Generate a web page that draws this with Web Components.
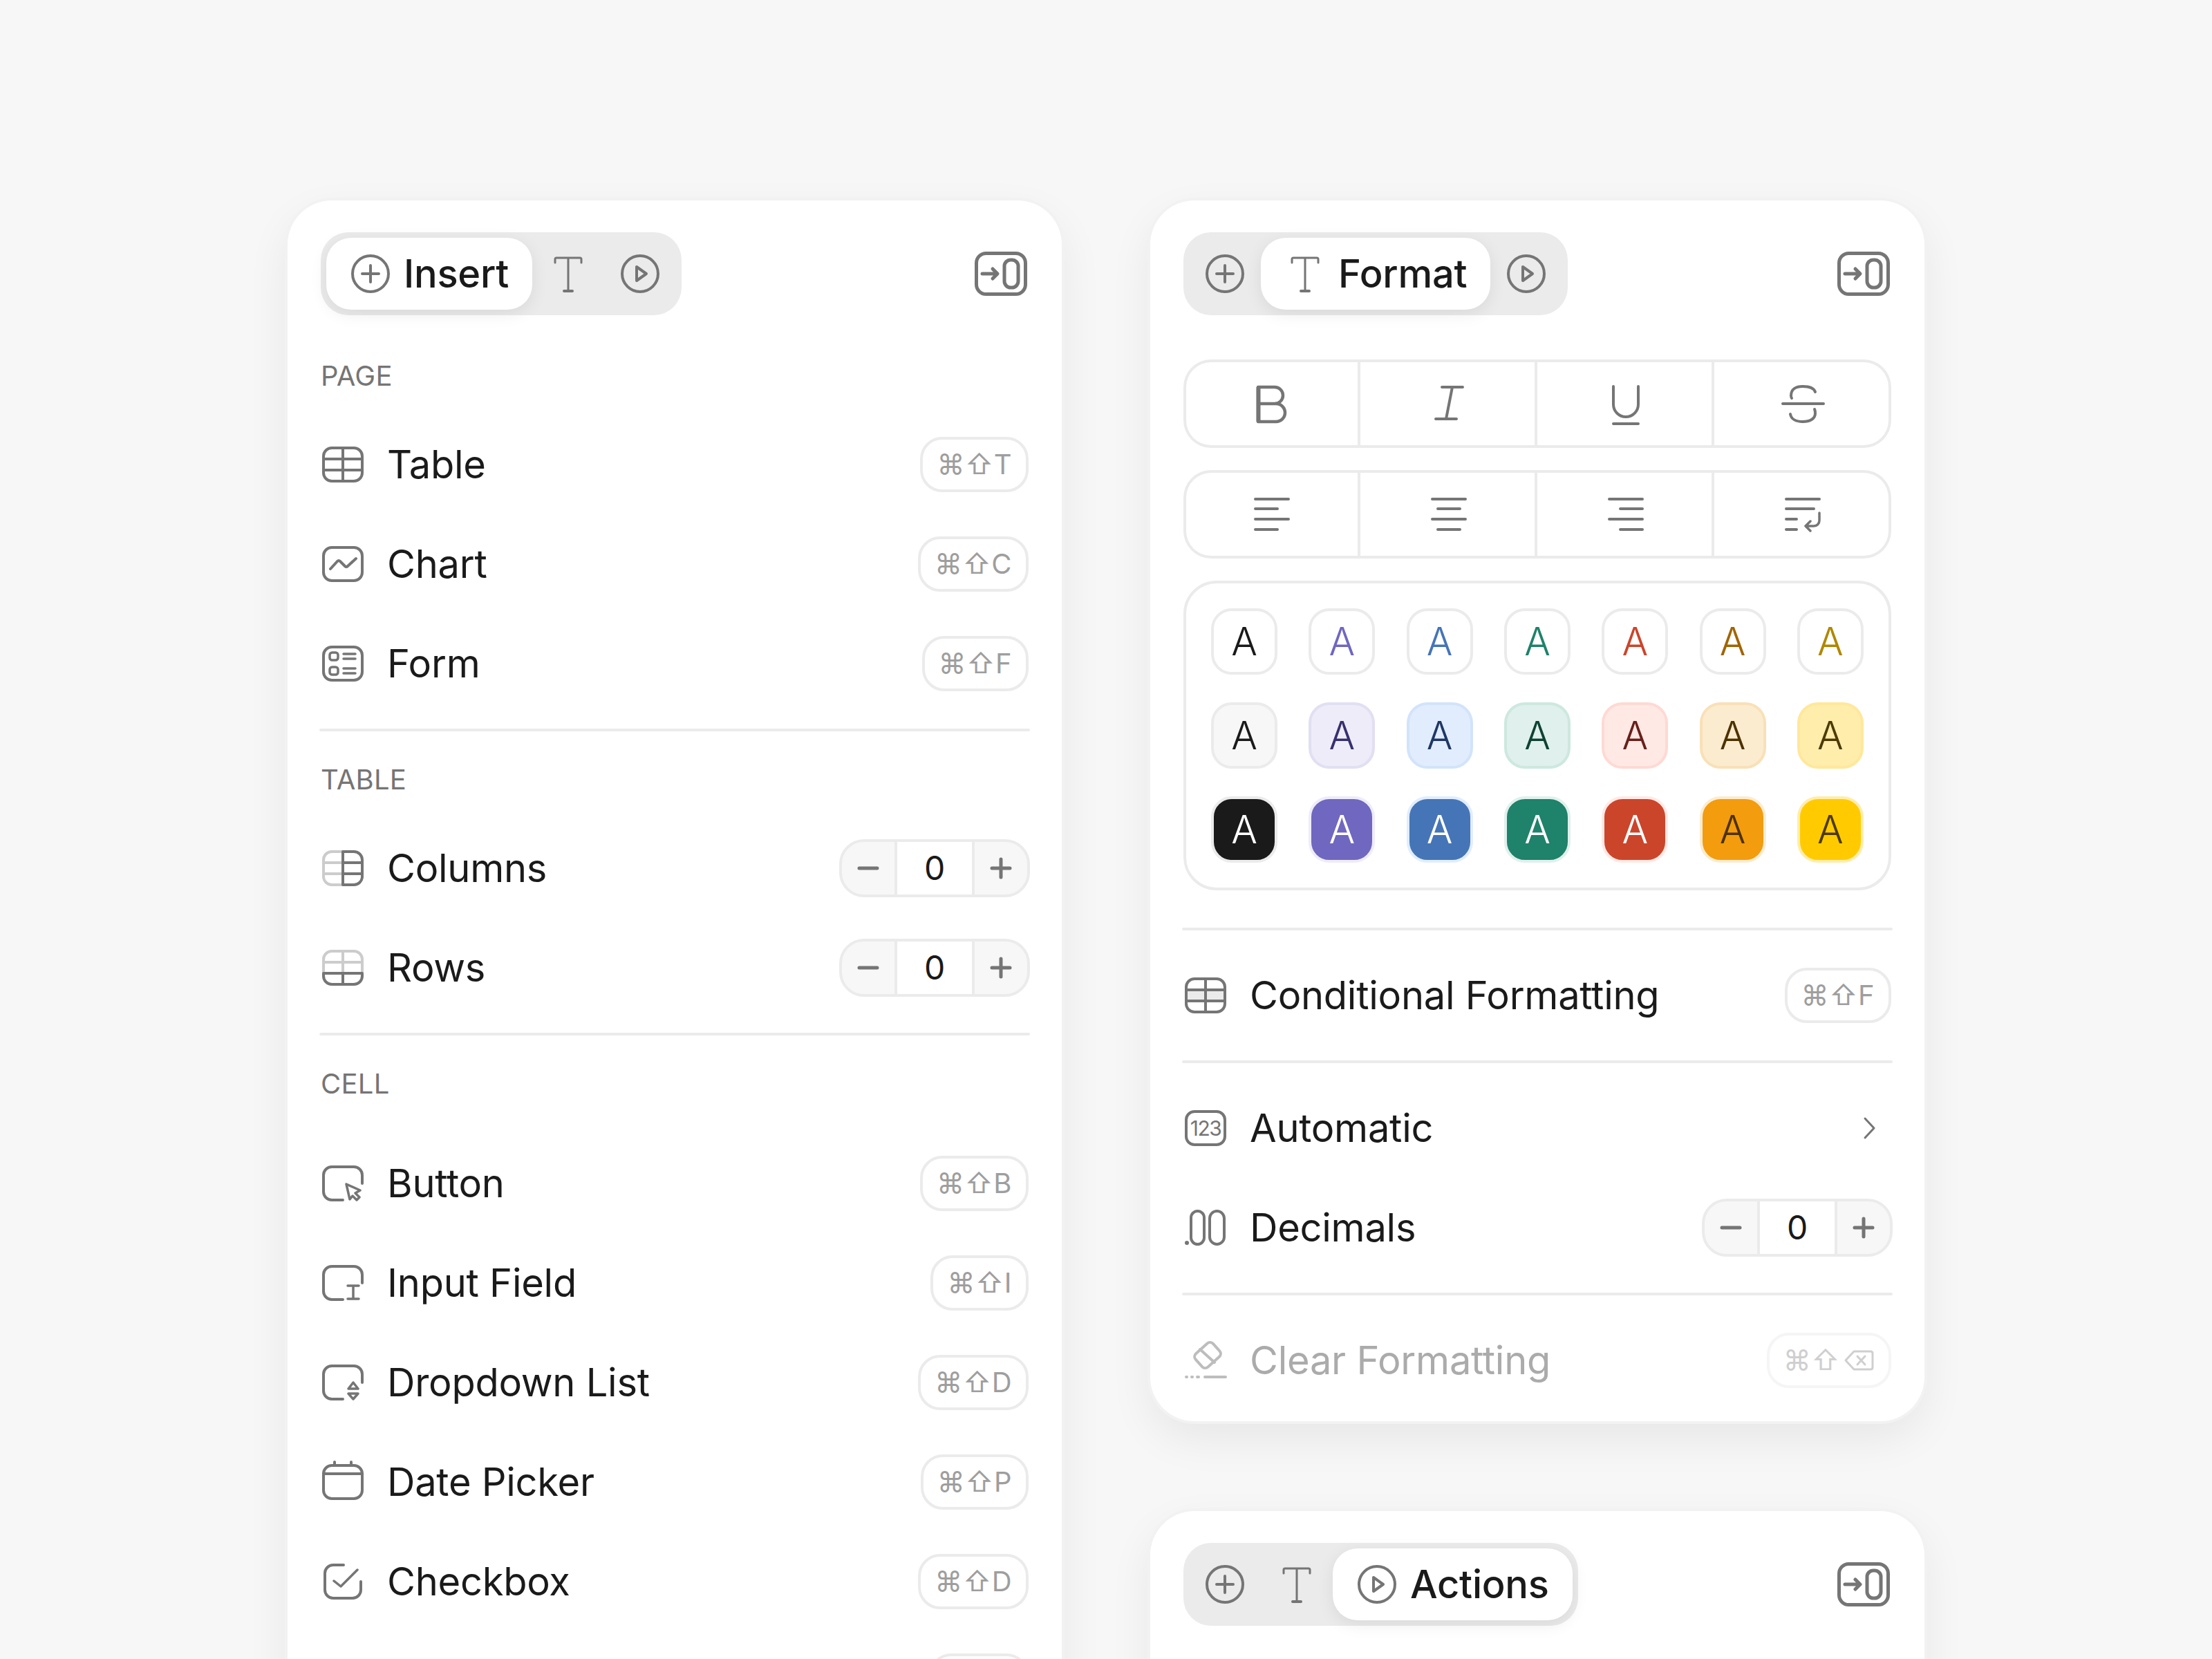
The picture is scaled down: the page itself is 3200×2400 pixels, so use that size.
<!DOCTYPE html>
<html>
<head>
<meta charset="utf-8">
<title>Panels</title>
<style>
    html, body { margin: 0; height: 2400px; overflow: hidden; background: #f7f7f7; }
    body { font-family: Inter, "Liberation Sans", sans-serif; color: #1a1a1a; }
</style>
</head>
<body>
<panel-board>
    <side-panel>
        <tab-bar active="insert"></tab-bar>
        <section-label>PAGE</section-label>
        <menu-row icon="table" keys="⌘⇧T">Table</menu-row>
        <menu-row icon="chart" keys="⌘⇧C">Chart</menu-row>
        <menu-row icon="form" keys="⌘⇧F">Form</menu-row>
        <rule-line></rule-line>
        <section-label>TABLE</section-label>
        <menu-row icon="columns" stepper>Columns</menu-row>
        <menu-row icon="rows" stepper>Rows</menu-row>
        <rule-line></rule-line>
        <section-label wide>CELL</section-label>
        <menu-row icon="button" keys="⌘⇧B">Button</menu-row>
        <menu-row icon="input" keys="⌘⇧I">Input Field</menu-row>
        <menu-row icon="dropdown" keys="⌘⇧D">Dropdown List</menu-row>
        <menu-row icon="date" keys="⌘⇧P">Date Picker</menu-row>
        <menu-row icon="checkbox" keys="⌘⇧D">Checkbox</menu-row>
        <menu-row keys=""></menu-row>
    </side-panel>
    <panel-column>
        <side-panel>
            <tab-bar active="format"></tab-bar>
            <button-group icons="bold italic underline strike"></button-group>
            <button-group icons="left center right wrap"></button-group>
            <color-grid></color-grid>
            <rule-line></rule-line>
            <menu-row icon="conditional" keys="⌘⇧F">Conditional Formatting</menu-row>
            <rule-line></rule-line>
            <menu-row icon="numbers" chevron>Automatic</menu-row>
            <menu-row icon="decimals" stepper>Decimals</menu-row>
            <rule-line></rule-line>
            <menu-row icon="eraser" keys="⌘⇧" backspace disabled>Clear Formatting</menu-row>
        </side-panel>
        <side-panel tall>
            <tab-bar active="actions"></tab-bar>
        </side-panel>
    </panel-column>
</panel-board>

<script>
const FRAME_OPEN = 'M60 32V20a12 12 0 0 0-12-12H16A12 12 0 0 0 4 20v24a12 12 0 0 0 12 12h16';
const ICONS = {
    plus: '<circle cx="32" cy="32" r="26"/><path d="M20 32h24M32 20v24"/>',
    text: '<path d="M13 16v-5q0-2 2-2h34q2 0 2 2v5M32 9v47" stroke-width="3"/><path d="M26 57h12"/>',
    play: '<circle cx="32" cy="32" r="26"/><path d="M27 22v20l14-10z"/>',
    table: '<rect x="4" y="8" width="56" height="48" rx="12"/><path d="M4 24h56M4 40h56M32 8v48"/>',
    chart: '<rect x="4" y="8" width="56" height="48" rx="12"/><path d="M14 39l10-11q2-2 4 0l7 7q2 2 4 0l12-11"/>',
    form: '<rect x="4" y="8" width="56" height="48" rx="12"/><rect x="13" y="16" width="12" height="11" rx="3.5" stroke-width="3.5"/><rect x="13" y="37" width="12" height="11" rx="3.5" stroke-width="3.5"/><path d="M33 18h17M33 25h17M33 39h17M33 46h17" stroke-width="3.5"/>',
    columns: '<g stroke="#cccccc"><path d="M32 8H16A12 12 0 0 0 4 20v24a12 12 0 0 0 12 12h16M4 24h28M4 40h28"/></g><path d="M32 8h16a12 12 0 0 1 12 12v24a12 12 0 0 1-12 12H32zM32 24h28M32 40h28"/>',
    rows: '<g stroke="#cccccc"><path d="M4 40V20A12 12 0 0 1 16 8h32a12 12 0 0 1 12 12v20M4 24h56M32 8v32"/></g><path d="M4 40h56v4a12 12 0 0 1-12 12H16A12 12 0 0 1 4 44zM32 40v16"/>',
    button: `<path d="${FRAME_OPEN}"/><path d="M37 33l20 9-7 4 6 6-4 4-6-6-4 5z" stroke-width="3.5"/>`,
    input: `<path d="${FRAME_OPEN}"/><path d="M39 36h16M39 55h16M47 36v19" stroke-width="3.5"/>`,
    dropdown: `<path d="${FRAME_OPEN}"/><path d="M47 32l7 9H40zM40 48h14l-7 8z" stroke-width="3.5"/>`,
    date: '<rect x="4" y="8" width="56" height="48" rx="12"/><path d="M4 20h56M20 3v5M44 3v5"/>',
    checkbox: '<path d="M33 8H18A12 12 0 0 0 6 20v24a12 12 0 0 0 12 12h28a12 12 0 0 0 12-12V32"/><path d="M19 31l10 8 24-24" stroke-width="3.5"/>',
    conditional: '<rect x="4" y="24" width="56" height="16" fill="#ebebeb" stroke="none"/><rect x="4" y="8" width="56" height="48" rx="12"/><path d="M4 24h56M4 40h56M32 8v48"/>',
    numbers: '<rect x="4" y="8" width="56" height="48" rx="12"/><text x="32" y="43" text-anchor="middle" font-size="30" letter-spacing="-1.5" fill="currentColor" stroke="none">123</text>',
    decimals: '<circle cx="5" cy="54" r="3" fill="currentColor" stroke="none"/><rect x="11" y="8" width="19" height="48" rx="9.5"/><rect x="38" y="8" width="21" height="48" rx="10.5"/>',
    eraser: '<rect x="18" y="11.500" width="34" height="26" rx="6" transform="rotate(-42 35 24.500)"/><path d="M24 16l21 19"/><path d="M4 56h1M12 56h1M20 56h2M31 56h30"/>',
    bold: '<path d="M12 8h24a12 12 0 0 1 0 24H12zM12 32h26a13 13 0 0 1 0 26H12z" stroke-width="4.500"/><path d="M12.500 8v50" stroke-width="6" stroke-linecap="butt"/>',
    italic: '<path d="M22 8h30M13 54h30M37 8l-9 46"/>',
    underline: '<path d="M14 7v26a18 18 0 0 0 36 0V7M14 61h36"/>',
    strike: '<path d="M50 15c-2-6-9-8-18-8-10 0-17 4-17 13 0 1 0 3 1 4M49 40c1 2 1 4 1 6 0 8-8 12-18 12S15 54 14 47M3 32h59"/>',
    left: '<path d="M8 10h48M8 24h32M8 39h48M8 54h32"/>',
    center: '<path d="M8 10h48M16 24h32M8 39h48M16 54h32"/>',
    right: '<path d="M8 10h48M24 24h32M8 39h48M24 54h32"/>',
    wrap: '<path d="M8 10h48M8 24h40M8 39h15M8 54h15"/><path d="M56 30v11a8 8 0 0 1-8 8H36M43 42l-7 7 7 7" stroke-width="3.5"/>',
    collapse: '<rect x="2.500" y="2.500" width="71" height="59" rx="14" stroke-width="5"/><rect x="43" y="12" width="20" height="40" rx="9" stroke-width="5"/><path d="M11 32h21M26 25l7 7-7 7" stroke-width="5"/>',
    chevron: '<path d="M26 18l13 14-13 14" stroke-width="3"/>',
    backspace: '<path d="M14 3h24q3 0 3 3v20q0 3-3 3H14L2 16zM19 10l11 12M30 10L19 22" stroke-width="3"/>'
};

class PanelBoard extends HTMLElement {
    constructor() {
        super();
        this.attachShadow({ mode: 'open' });
        this.shadowRoot.innerHTML = `
            <style>
                :host {
                    display: flex;
                    align-items: flex-start;
                    gap: 128px;
                    padding: 290px 0 0 416px;
                }
            </style>
            <slot></slot>
        `;
    }
}

class PanelColumn extends HTMLElement {
    constructor() {
        super();
        this.attachShadow({ mode: 'open' });
        this.shadowRoot.innerHTML = `
            <style>
                :host {
                    display: flex;
                    flex-direction: column;
                    gap: 130px;
                }
            </style>
            <slot></slot>
        `;
    }
}

class SidePanel extends HTMLElement {
    constructor() {
        super();
        this.attachShadow({ mode: 'open' });
        this.shadowRoot.innerHTML = `
            <style>
                :host {
                    display: flex;
                    flex-direction: column;
                    flex: none;
                    box-sizing: border-box;
                    width: 1120px;
                    padding: 46px 48px 16px;
                    background: #fff;
                    border-radius: 64px;
                    box-shadow: 0 0 0 4px #f2f2f2, 0 24px 64px rgba(0, 0, 0, 0.07);
                }

                :host([tall]) {
                    min-height: 500px;
                }
            </style>
            <slot></slot>
        `;
    }
}

class UiIcon extends HTMLElement {
    constructor() {
        super();
        this.attachShadow({ mode: 'open' });
    }

    connectedCallback() {
        const width = this.getAttribute('width') || 64;
        const height = this.getAttribute('height') || 64;
        this.shadowRoot.innerHTML = `
            <style>
                :host {
                    display: block;
                    flex: none;
                    width: ${width}px;
                    height: ${height}px;
                    color: var(--icon-color, #757575);
                }

                svg {
                    display: block;
                    overflow: visible;
                    fill: none;
                    stroke: currentColor;
                    stroke-width: 4;
                    stroke-linecap: round;
                    stroke-linejoin: round;
                }
            </style>
            <svg width="${width}" height="${height}" viewBox="0 0 ${width} ${height}">${ICONS[this.getAttribute('name')] || ''}</svg>
        `;
    }
}

const TABS = [
    { id: 'insert', icon: 'plus', label: 'Insert' },
    { id: 'format', icon: 'text', label: 'Format' },
    { id: 'actions', icon: 'play', label: 'Actions' }
];

class TabBar extends HTMLElement {
    constructor() {
        super();
        this.attachShadow({ mode: 'open' });
    }

    connectedCallback() {
        const active = this.getAttribute('active');
        const tabs = TABS.map(tab => tab.id === active
            ? `<div class="tab on"><ui-icon name="${tab.icon}"></ui-icon><span>${tab.label}</span></div>`
            : `<div class="tab"><ui-icon name="${tab.icon}"></ui-icon></div>`).join('');
        this.shadowRoot.innerHTML = `
            <style>
                :host {
                    display: flex;
                    align-items: center;
                    justify-content: space-between;
                    margin-bottom: 64px;
                }

                .pill {
                    display: flex;
                    padding: 8px;
                    background: #ebebeb;
                    border-radius: 40px;
                }

                .tab {
                    display: flex;
                    align-items: center;
                    box-sizing: border-box;
                    height: 104px;
                    padding: 0 20px;
                }

                .tab.on {
                    gap: 16px;
                    padding: 0 34px 0 32px;
                    background: #fff;
                    border-radius: 36px;
                    box-shadow: 0 6px 24px rgba(0, 0, 0, 0.08);
                }

                span {
                    font-size: 56px;
                    font-weight: 500;
                    line-height: 64px;
                    letter-spacing: -0.25px;
                    color: #1a1a1a;
                }

                .end {
                    margin-right: 2px;
                }
            </style>
            <div class="pill">${tabs}</div>
            <ui-icon class="end" name="collapse" width="76"></ui-icon>
        `;
    }
}

class SectionLabel extends HTMLElement {
    constructor() {
        super();
        this.attachShadow({ mode: 'open' });
        this.shadowRoot.innerHTML = `
            <style>
                :host {
                    display: block;
                    margin: 0 0 32px;
                    font-size: 40px;
                    line-height: 48px;
                    letter-spacing: 0.25px;
                    color: #757575;
                }

                :host([wide]) {
                    margin-bottom: 48px;
                }
            </style>
            <slot></slot>
        `;
    }
}

class RuleLine extends HTMLElement {
    constructor() {
        super();
        this.attachShadow({ mode: 'open' });
        this.shadowRoot.innerHTML = `
            <style>
                :host {
                    display: block;
                    height: 4px;
                    margin: 22px -2px;
                    background: #ebebeb;
                    border-radius: 2px;
                }
            </style>
        `;
    }

    connectedCallback() {
        const next = this.nextElementSibling;
        if (next && next.tagName === 'SECTION-LABEL') {
            this.style.marginBottom = '46px';
        }
    }
}

class KeyHint extends HTMLElement {
    constructor() {
        super();
        this.attachShadow({ mode: 'open' });
    }

    connectedCallback() {
        const backspace = this.hasAttribute('backspace')
            ? '<ui-icon class="del" name="backspace" width="44" height="32"></ui-icon>' : '';
        this.shadowRoot.innerHTML = `
            <style>
                :host {
                    display: flex;
                    align-items: center;
                    box-sizing: border-box;
                    height: 80px;
                    padding: 0 20px;
                    border: 4px solid #ebebeb;
                    border-radius: 32px;
                    font-size: 40px;
                    line-height: 48px;
                    letter-spacing: 0.5px;
                    color: #9e9e9e;
                    --icon-color: #cfcfcf;
                }

                :host([keys=""]) {
                    width: 144px;
                }

                :host([disabled]) {
                    border-color: #f5f5f5;
                    color: #cfcfcf;
                }

                .del {
                    margin-left: 6px;
                }
            </style>
            <span>${this.getAttribute('keys')}</span>${backspace}
        `;
    }
}

class NumStepper extends HTMLElement {
    constructor() {
        super();
        this.attachShadow({ mode: 'open' });
        this.shadowRoot.innerHTML = `
            <style>
                :host {
                    display: grid;
                    grid-template-columns: 76px 116px 76px;
                    height: 76px;
                    margin-right: -2px;
                    border: 4px solid #ebebeb;
                    border-radius: 36px;
                    overflow: hidden;
                    background: #f7f7f7;
                }

                div {
                    display: flex;
                    align-items: center;
                    justify-content: center;
                    font-size: 48px;
                    line-height: 56px;
                }

                .value {
                    background: #fff;
                    border-left: 4px solid #ebebeb;
                    border-right: 4px solid #ebebeb;
                    color: #1a1a1a;
                }

                svg {
                    stroke: #757575;
                    stroke-width: 5;
                    stroke-linecap: round;
                }
            </style>
            <div><svg width="32" height="32" viewBox="0 0 32 32"><path d="M3 16h26"/></svg></div>
            <div class="value">0</div>
            <div><svg width="32" height="32" viewBox="0 0 32 32"><path d="M3 16h26M16 3v26"/></svg></div>
        `;
    }
}

class MenuRow extends HTMLElement {
    constructor() {
        super();
        this.attachShadow({ mode: 'open' });
    }

    connectedCallback() {
        const icon = this.getAttribute('icon');
        let trailing = '';
        if (this.hasAttribute('keys')) {
            const extra = (this.hasAttribute('backspace') ? ' backspace' : '') + (this.hasAttribute('disabled') ? ' disabled' : '');
            trailing = `<key-hint keys="${this.getAttribute('keys')}"${extra}></key-hint>`;
        } else if (this.hasAttribute('stepper')) {
            trailing = '<num-stepper></num-stepper>';
        } else if (this.hasAttribute('chevron')) {
            trailing = '<ui-icon name="chevron"></ui-icon>';
        }
        this.shadowRoot.innerHTML = `
            <style>
                :host {
                    display: flex;
                    align-items: center;
                    gap: 32px;
                    height: 144px;
                    font-size: 56px;
                    line-height: 64px;
                    letter-spacing: -0.25px;
                    color: #1a1a1a;
                }

                :host([disabled]) {
                    color: #ababab;
                    --icon-color: #bdbdbd;
                }

                .label {
                    flex: 1;
                }
            </style>
            ${icon ? `<ui-icon name="${icon}"></ui-icon>` : ''}
            <div class="label"><slot></slot></div>
            ${trailing}
        `;
    }
}

class ButtonGroup extends HTMLElement {
    constructor() {
        super();
        this.attachShadow({ mode: 'open' });
    }

    connectedCallback() {
        const cells = this.getAttribute('icons').split(' ')
            .map(name => `<div><ui-icon name="${name}"></ui-icon></div>`).join('');
        this.shadowRoot.innerHTML = `
            <style>
                :host {
                    display: grid;
                    grid-template-columns: repeat(4, 1fr);
                    height: 128px;
                    margin-bottom: 32px;
                    border-radius: 40px;
                    box-shadow: inset 0 0 0 4px #ebebeb;
                }

                div {
                    display: flex;
                    align-items: center;
                    justify-content: center;
                    border-right: 4px solid #ebebeb;
                }

                div ui-icon {
                    margin-right: -4px;
                }

                div:last-child {
                    border-right: 0;
                }

                div:last-child ui-icon {
                    margin-right: 0;
                }
            </style>
            ${cells}
        `;
    }
}

const SWATCHES = [
    ['#ffffff', '#ebebeb', '#1a1a1a'], ['#ffffff', '#ebebeb', '#7067c0'], ['#ffffff', '#ebebeb', '#4575b6'], ['#ffffff', '#ebebeb', '#1f826a'], ['#ffffff', '#ebebeb', '#cb452b'], ['#ffffff', '#ebebeb', '#a06500'], ['#ffffff', '#ebebeb', '#b08700'],
    ['#f7f7f7', '#ebebeb', '#1a1a1a'], ['#eeecf8', '#e1dff2', '#37306f'], ['#e1edfd', '#d2e3fb', '#1f3764'], ['#e0f0ec', '#cde8df', '#0f4234'], ['#ffe9e5', '#ffd9d3', '#67201a'], ['#fbecd0', '#f9e0b7', '#4d3200'], ['#ffedac', '#ffe89c', '#4d3a00'],
    ['#1a1a1a', '#ebebeb', '#ffffff'], ['#7067c0', '#eeecf8', '#ffffff'], ['#4575b6', '#e1edfd', '#ffffff'], ['#1f826a', '#e0f0ec', '#ffffff'], ['#cb452b', '#ffe9e5', '#ffffff'], ['#f39c0e', '#fbecd0', '#4d3200'], ['#ffcb00', '#ffedac', '#4d3a00']
];

class ColorGrid extends HTMLElement {
    constructor() {
        super();
        this.attachShadow({ mode: 'open' });
        const cells = SWATCHES.map(([bg, border, color]) =>
            `<div style="background:${bg};border-color:${border};color:${color}">A</div>`).join('');
        this.shadowRoot.innerHTML = `
            <style>
                :host {
                    display: grid;
                    grid-template-columns: repeat(7, 96px);
                    justify-content: space-between;
                    row-gap: 40px;
                    margin-bottom: 32px;
                    padding: 36px;
                    border: 4px solid #ebebeb;
                    border-radius: 48px;
                }

                div {
                    display: flex;
                    align-items: center;
                    justify-content: center;
                    box-sizing: border-box;
                    height: 96px;
                    border: 4px solid;
                    border-radius: 30px;
                    font-size: 56px;
                    line-height: 64px;
                    font-weight: 300;
                }
            </style>
            ${cells}
        `;
    }
}

customElements.define('panel-board', PanelBoard);
customElements.define('panel-column', PanelColumn);
customElements.define('side-panel', SidePanel);
customElements.define('ui-icon', UiIcon);
customElements.define('tab-bar', TabBar);
customElements.define('section-label', SectionLabel);
customElements.define('rule-line', RuleLine);
customElements.define('key-hint', KeyHint);
customElements.define('num-stepper', NumStepper);
customElements.define('menu-row', MenuRow);
customElements.define('button-group', ButtonGroup);
customElements.define('color-grid', ColorGrid);
</script>
</body>
</html>
